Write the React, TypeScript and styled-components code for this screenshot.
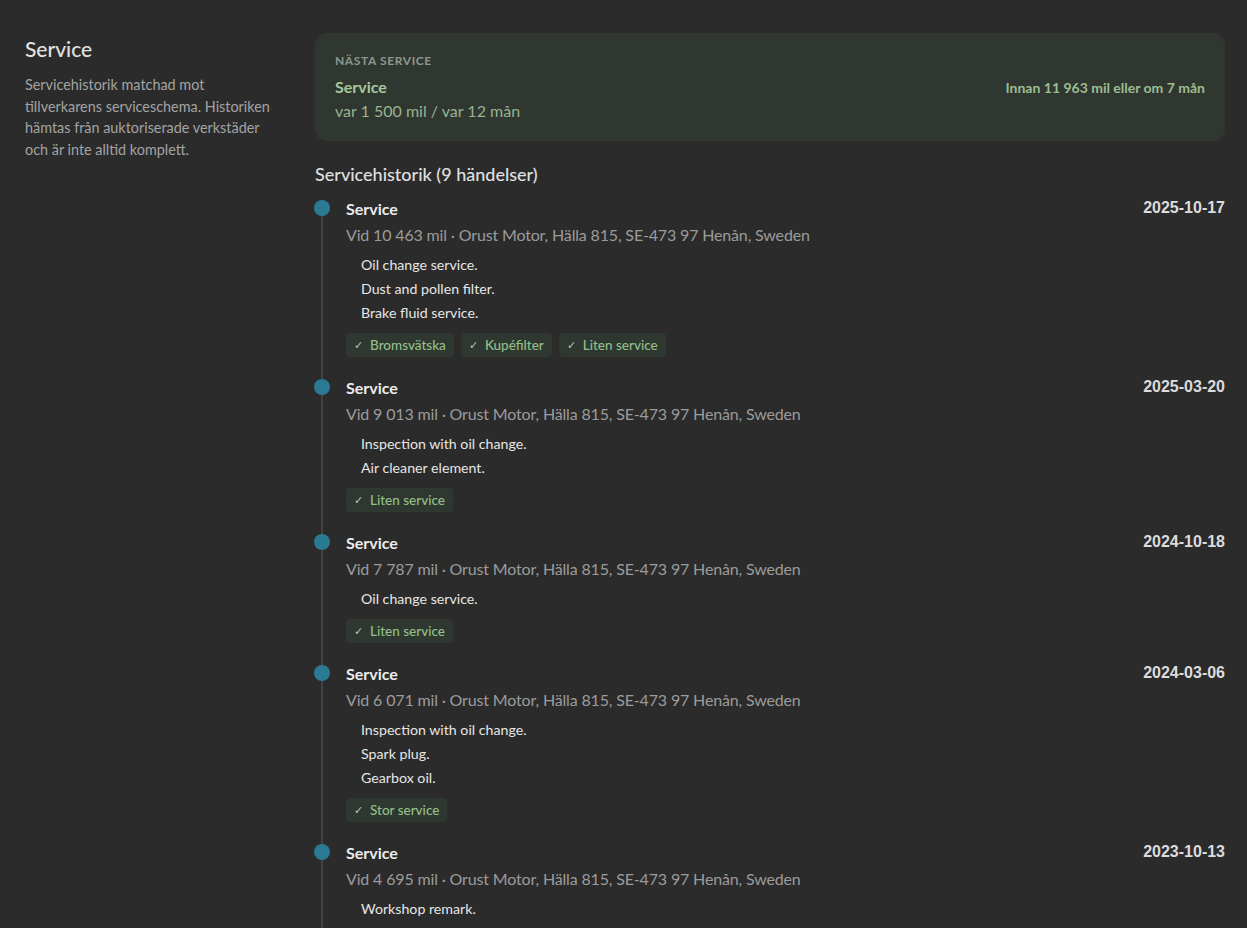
import styled, { createGlobalStyle } from 'styled-components';

const GlobalStyle = createGlobalStyle`
  html, body {
    margin: 0;
    padding: 0;
    background: #2b2b2b;
  }
  body {
    font-family: Lato, "Noto Sans", sans-serif;
    color: #e4e4e4;
  }
`;

type Event = {
  date: string;
  mil: string;
  notes: string[];
  tags: string[];
};

const events: Event[] = [
  {
    date: '2025-10-17',
    mil: '10 463',
    notes: ['Oil change service.', 'Dust and pollen filter.', 'Brake fluid service.'],
    tags: ['Bromsvätska', 'Kupéfilter', 'Liten service'],
  },
  {
    date: '2025-03-20',
    mil: '9 013',
    notes: ['Inspection with oil change.', 'Air cleaner element.'],
    tags: ['Liten service'],
  },
  {
    date: '2024-10-18',
    mil: '7 787',
    notes: ['Oil change service.'],
    tags: ['Liten service'],
  },
  {
    date: '2024-03-06',
    mil: '6 071',
    notes: ['Inspection with oil change.', 'Spark plug.', 'Gearbox oil.'],
    tags: ['Stor service'],
  },
  {
    date: '2023-10-13',
    mil: '4 695',
    notes: ['Workshop remark.'],
    tags: [],
  },
];

const App = () => {
  return (
    <>
      <GlobalStyle />
      <Page>
        <Aside>
          <AsideTitle>Service</AsideTitle>
          <AsideText>
            Servicehistorik matchad mot tillverkarens serviceschema. Historiken
            hämtas från auktoriserade verkstäder och är inte alltid komplett.
          </AsideText>
        </Aside>
        <Main>
          <NextCard>
            <NextLabel>Nästa service</NextLabel>
            <NextRow>
              <NextName>Service</NextName>
              <NextDue>Innan 11 963 mil eller om 7 mån</NextDue>
            </NextRow>
            <NextInterval>var 1 500 mil / var 12 mån</NextInterval>
          </NextCard>
          <HistoryTitle>Servicehistorik (9 händelser)</HistoryTitle>
          <Timeline>
            {events.map((ev) => (
              <Item key={ev.date}>
                <Dot />
                <ItemHead>
                  <ItemTitle>Service</ItemTitle>
                  <ItemDate>{ev.date}</ItemDate>
                </ItemHead>
                <ItemMeta>
                  Vid {ev.mil} mil · Orust Motor, Hälla 815, SE-473 97 Henån, Sweden
                </ItemMeta>
                <Notes>
                  {ev.notes.map((n) => (
                    <li key={n}>{n}</li>
                  ))}
                </Notes>
                {ev.tags.length > 0 && (
                  <Tags>
                    {ev.tags.map((t) => (
                      <Tag key={t}>
                        <Check>✓</Check>
                        {t}
                      </Tag>
                    ))}
                  </Tags>
                )}
              </Item>
            ))}
          </Timeline>
        </Main>
      </Page>
    </>
  );
};

const Page = styled.div`
  display: flex;
  gap: 40px;
  padding: 33px 22px 0 25px;
  height: 928px;
  box-sizing: border-box;
  overflow: hidden;
`;

const Aside = styled.aside`
  width: 250px;
  flex-shrink: 0;
`;

const AsideTitle = styled.h2`
  margin: 4px 0 13px;
  font-size: 21px;
  line-height: 24px;
  font-weight: 500;
  color: #e2e2e2;
`;

const AsideText = styled.p`
  margin: 0;
  font-size: 14.4px;
  line-height: 21.6px;
  color: #a3a3a3;
`;

const Main = styled.main`
  flex: 1;
  min-width: 0;
`;

const NextCard = styled.section`
  background: #303731;
  border-radius: 12px;
  padding: 20px 20px 18px;
`;

const NextLabel = styled.div`
  font-size: 12px;
  line-height: 16px;
  font-weight: 700;
  letter-spacing: 0.6px;
  text-transform: uppercase;
  color: #8e978f;
  margin-bottom: 6px;
`;

const NextRow = styled.div`
  display: flex;
  justify-content: space-between;
  align-items: center;
`;

const NextName = styled.div`
  font-size: 16px;
  line-height: 24px;
  font-weight: 700;
  color: #a6c79c;
`;

const NextDue = styled.div`
  font-size: 14px;
  font-weight: 700;
  color: #9cbd90;
`;

const NextInterval = styled.div`
  font-size: 16px;
  line-height: 24px;
  color: #98b38f;
`;

const HistoryTitle = styled.h3`
  margin: 21px 0 10px;
  font-size: 18px;
  line-height: 24px;
  font-weight: 500;
  color: #e0e0e0;
`;

const Timeline = styled.div`
  position: relative;
  &::before {
    content: '';
    position: absolute;
    left: 6px;
    top: 10px;
    bottom: 0;
    width: 2px;
    background: #424242;
  }
`;

const Item = styled.div`
  position: relative;
  padding: 0 0 18px 31px;
`;

const Dot = styled.span`
  position: absolute;
  left: -1px;
  top: 4px;
  width: 16px;
  height: 16px;
  border-radius: 50%;
  background: #2a7a94;
`;

const ItemHead = styled.div`
  display: flex;
  justify-content: space-between;
  align-items: center;
  height: 24px;
`;

const ItemTitle = styled.div`
  font-size: 16px;
  font-weight: 700;
  color: #ececec;
`;

const ItemDate = styled.div`
  font-family: "Liberation Sans", Arial, sans-serif;
  font-size: 16px;
  font-weight: 700;
  color: #dcdcdc;
`;

const ItemMeta = styled.div`
  margin-top: 2px;
  font-size: 16px;
  line-height: 26px;
  letter-spacing: -0.16px;
  color: #9b9b9b;
`;

const Notes = styled.ul`
  list-style: none;
  margin: 5px 0 0;
  padding: 0 0 0 15px;
  font-size: 14.2px;
  line-height: 24px;
  color: #e6e6e6;
`;

const Tags = styled.div`
  display: flex;
  gap: 7px;
  margin-top: 8px;
`;

const Tag = styled.span`
  display: inline-flex;
  align-items: center;
  gap: 7px;
  height: 24px;
  padding: 0 8px;
  border-radius: 4px;
  background: #2f3830;
  color: #93bf88;
  font-size: 13.5px;
  font-weight: 500;
`;

const Check = styled.span`
  font-size: 11px;
  color: #b9c6b6;
`;

export default App;
